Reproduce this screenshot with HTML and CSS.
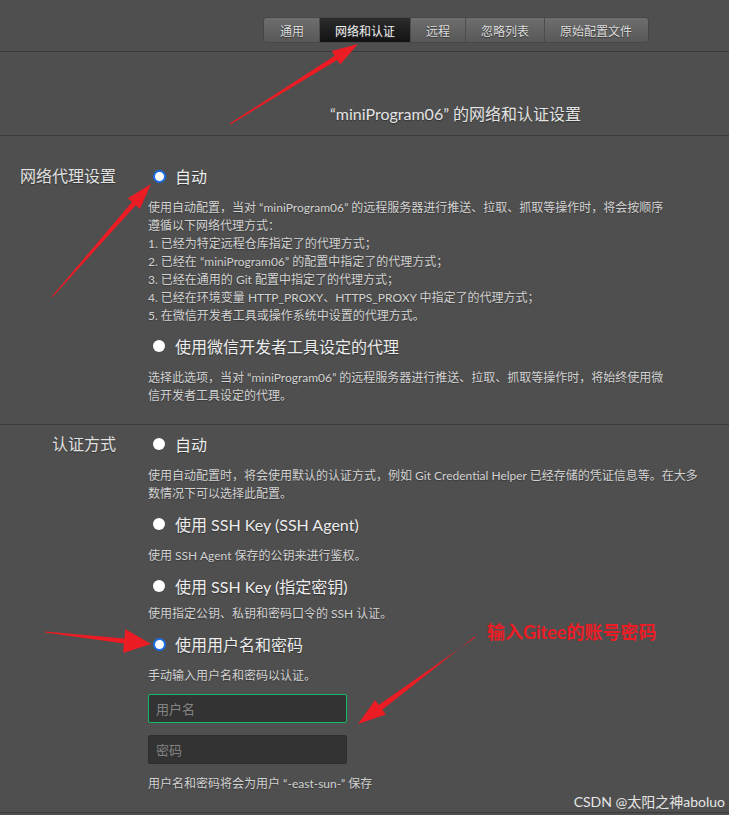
FILE: index.html
```html
<!DOCTYPE html>
<html lang="zh-CN">
<head>
    <meta charset="UTF-8">
    <meta name="viewport" content="width=device-width, initial-scale=1.0">
    <title>网络和认证</title>
    <link rel="stylesheet" href="styles.css">
</head>
<body>
    <div class="page">
        <header class="topbar">
            <nav class="tabs">
                <a href="#" class="tab">通用</a>
                <a href="#" class="tab active">网络和认证</a>
                <a href="#" class="tab">远程</a>
                <a href="#" class="tab">忽略列表</a>
                <a href="#" class="tab">原始配置文件</a>
            </nav>
        </header>

        <div class="title">“miniProgram06” 的网络和认证设置</div>

        <section class="group first">
            <div class="label">网络代理设置</div>
            <div class="options">
                <label class="option"><input type="radio" name="proxy" checked> 自动</label>
                <p class="desc">使用自动配置，当对 “miniProgram06” 的远程服务器进行推送、拉取、抓取等操作时，将会按顺序<br>遵循以下网络代理方式：<br>
                    1. 已经为特定远程仓库指定了的代理方式；<br>
                    2. 已经在 “miniProgram06” 的配置中指定了的代理方式；<br>
                    3. 已经在通用的 Git 配置中指定了的代理方式；<br>
                    4. 已经在环境变量 HTTP_PROXY、HTTPS_PROXY 中指定了的代理方式；<br>
                    5. 在微信开发者工具或操作系统中设置的代理方式。</p>
                <label class="option"><input type="radio" name="proxy"> 使用微信开发者工具设定的代理</label>
                <p class="desc">选择此选项，当对 “miniProgram06” 的远程服务器进行推送、拉取、抓取等操作时，将始终使用微<br>信开发者工具设定的代理。</p>
            </div>
        </section>

        <section class="group">
            <div class="label">认证方式</div>
            <div class="options">
                <label class="option"><input type="radio" name="auth"> 自动</label>
                <p class="desc">使用自动配置时，将会使用默认的认证方式，例如 Git Credential Helper 已经存储的凭证信息等。在大多<br>数情况下可以选择此配置。</p>
                <label class="option"><input type="radio" name="auth"> 使用 SSH Key (SSH Agent)</label>
                <p class="desc">使用 SSH Agent 保存的公钥来进行鉴权。</p>
                <label class="option"><input type="radio" name="auth"> 使用 SSH Key (指定密钥)</label>
                <p class="desc tight">使用指定公钥、私钥和密码口令的 SSH 认证。</p>
                <label class="option"><input type="radio" name="auth" checked> 使用用户名和密码</label>
                <p class="desc">手动输入用户名和密码以认证。</p>
                <input type="text" class="field focused" placeholder="用户名">
                <input type="password" class="field" placeholder="密码">
                <p class="desc note">用户名和密码将会为用户 “-east-sun-” 保存</p>
            </div>
        </section>

        <!-- red arrows drawn on top of the settings -->
        <svg class="marks" width="729" height="815" viewBox="0 0 729 815">
            <g fill="#ec1c24">
                <polygon points="230.3,124.4 337.3,59.9 340.2,64.6 358,44 331.8,51.0 334.7,55.7 229.7,123.6"/>
                <polygon points="52.4,297.3 135.8,205.2 139.9,208.9 151,184 127.9,198.3 132.0,202.0 51.6,296.7"/>
                <polygon points="44.9,632.5 123.9,643.5 123.2,652.9 151,644 125.2,629.1 124.5,638.5 45.1,631.5"/>
                <polygon points="474.7,636.6 382.3,709.7 385.9,714.5 358,724 375.1,700.1 378.7,704.9 475.3,637.4"/>
            </g>
        </svg>
        <div class="note-red">输入Gitee的账号密码</div>
        <div class="watermark">CSDN @太阳之神aboluo</div>
    </div>
</body>
</html>
```

FILE: styles.css
```css
body { margin: 0; background-color: #4f4f4f; font-family: Lato, "Noto Sans CJK SC", "Microsoft YaHei", sans-serif; color: #e2e2e2; }
.page { position: relative; width: 729px; height: 815px; overflow: hidden; }

.topbar { height: 52px; padding-left: 264px; padding-top: 18px; box-sizing: border-box; border-bottom: 1px solid #3b3b3b; }
.tabs { display: flex; width: 384px; height: 24px; border-radius: 3px; overflow: hidden; background: linear-gradient(#6e6e6e, #585858); box-shadow: 0 0 0 1px #474747; }
.tab { display: flex; align-items: center; justify-content: center; padding: 0 15px; font-size: 12px; color: #dcdcdc; text-decoration: none; text-shadow: 0 1px 1px #333; border-left: 1px solid #4c4c4c; }
.tab:first-child { border-left: none; padding-left: 16px; }
.tab.active { background: linear-gradient(#2c2c2c, #131313); color: #eeeeee; }

.title { padding: 50px 0 9px 182px; line-height: 24px; text-align: center; font-size: 16px; color: #e4e4e4; text-shadow: 0 1px 1px #333; border-bottom: 1px solid #3b3b3b; }

.group { display: grid; grid-template-columns: 116px 1fr; column-gap: 32px; padding: 7px 0 10px; border-bottom: 1px solid #3b3b3b; }
.group.first { padding-top: 28px; }
.label { text-align: right; font-size: 16px; line-height: 24px; color: #e2e2e2; text-shadow: 0 1px 1px #333; }
.options { display: flex; flex-direction: column; align-items: flex-start; }

.option { display: flex; align-items: center; height: 24px; font-size: 16px; color: #ececec; text-shadow: 0 1px 1px #333; }
.option input { appearance: none; width: 12px; height: 12px; margin: 0 10px 0 5px; border-radius: 50%; background: #ffffff; }
.option input:checked { width: 13px; height: 13px; margin-right: 9px; background: #ffffff; border: 2.5px solid #1a6de6; box-sizing: border-box; }

.desc { margin: 11px 0 9px; font-size: 12px; line-height: 18px; color: #d2d2d2; white-space: nowrap; text-shadow: 0 1px 1px #3a3a3a; }
.desc.tight { margin-top: 7px; }
.desc.note { margin: 11px 0 9px; }

.field { width: 199px; height: 29px; box-sizing: border-box; margin: 0 0 12px; padding: 0 7px; background: #333333; border: 1px solid #2f2f2f; border-radius: 2px; font-family: inherit; font-size: 13px; color: #dddddd; outline: none; }
.field::placeholder { color: #848484; }
.field.focused { border-color: #13b868; }
.field + .field { margin-bottom: 0; }

.marks { position: absolute; left: 0; top: 0; pointer-events: none; }
.note-red { position: absolute; left: 487px; top: 618px; font-size: 18px; font-weight: bold; color: #ec1c24; }
.watermark { position: absolute; right: 4px; top: 791px; font-size: 14px; color: #e6e6e6; }
```
